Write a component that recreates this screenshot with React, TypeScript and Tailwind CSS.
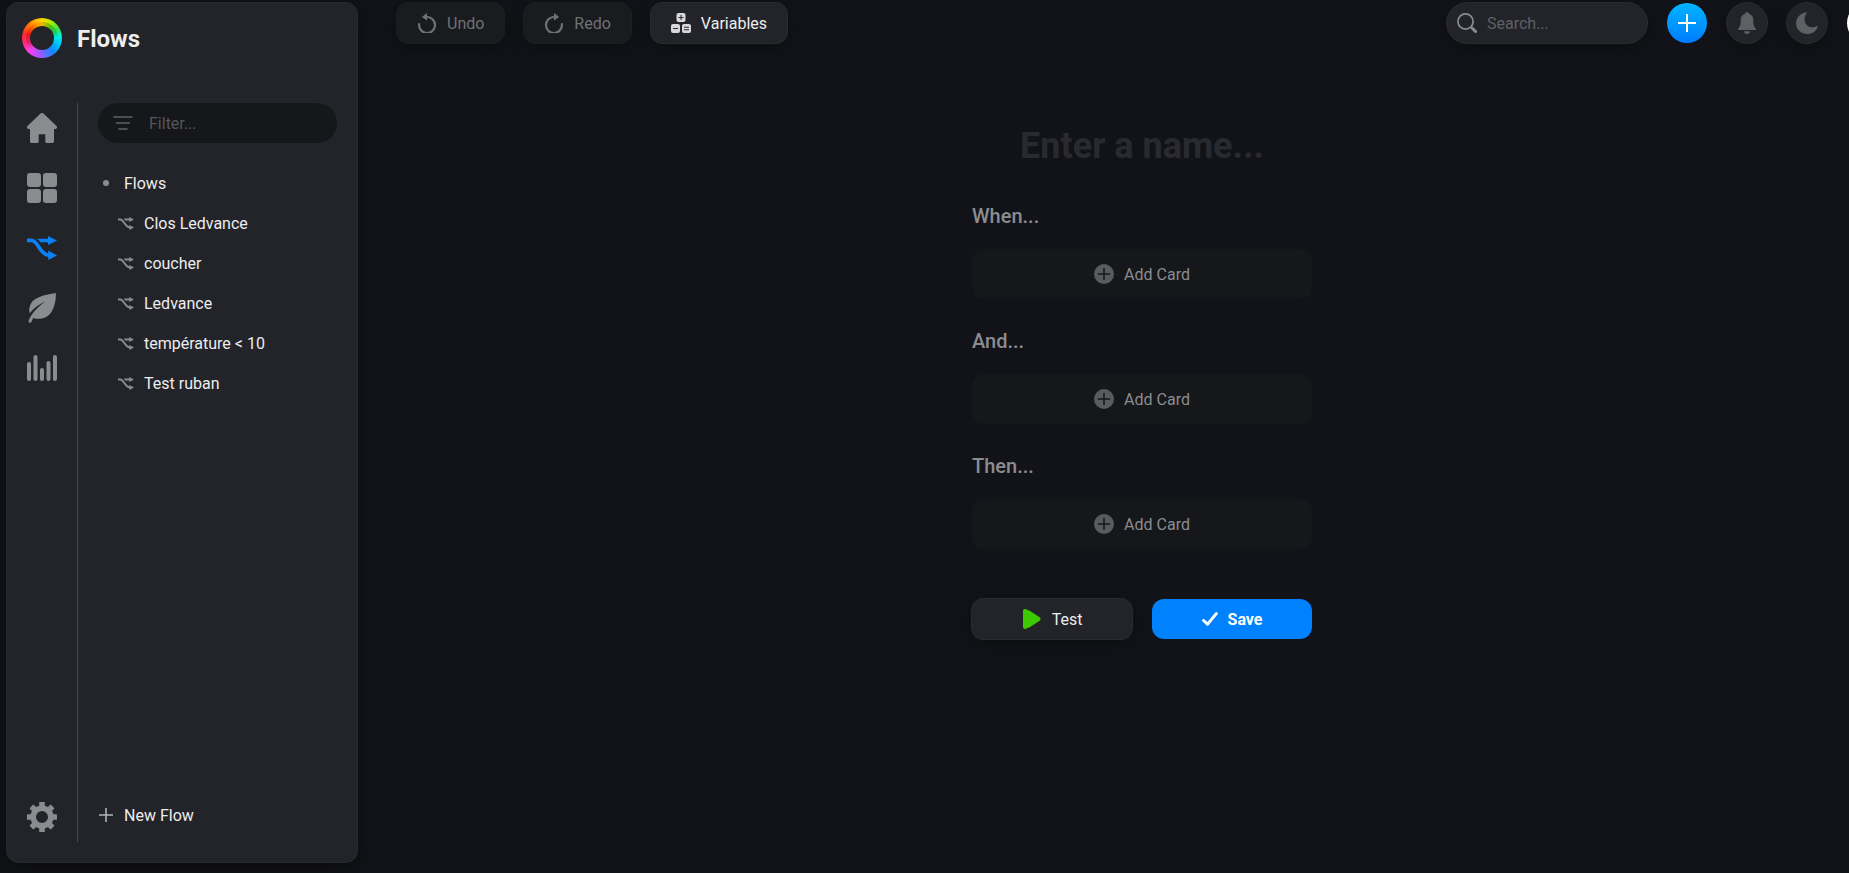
import React from "react";

type IconProps = { className?: string };

function Logo() {
  return (
    <span
      aria-hidden="true"
      className="grid size-10 shrink-0 place-items-center rounded-full bg-[conic-gradient(#ffd800,#a6f000_30deg,#3fe04a_60deg,#00f0d8_85deg,#00c8ff_110deg,#0a8cff_140deg,#6a6cff_170deg,#c04cff_195deg,#ff3cf0_225deg,#ff2a70_255deg,#ff2a2a_285deg,#ff7a00_315deg,#ffc400_345deg,#ffd800)]"
    >
      <span className="grid size-8 place-items-center rounded-full bg-[conic-gradient(#f0b400,#58c000_35deg,#18c860_65deg,#00e8f0_90deg,#00a8ff_120deg,#2a7cff_150deg,#8c5cff_185deg,#e844f0_220deg,#e02060_255deg,#e81818_285deg,#f06000_315deg,#ff9c00_340deg,#f0b400)]">
        <span className="size-6 rounded-full bg-[#232429]" />
      </span>
    </span>
  );
}

function HomeIcon() {
  return (
    <svg viewBox="0 0 30 30" className="size-[30px]" fill="currentColor" aria-hidden="true">
      <path d="M13.5.6a2.2 2.2 0 0 1 3 0l13 12.4c1.1 1.1.5 3-1.100 3H27v12.2c0 1-.8 1.8-1.8 1.8h-5.4c-.9 0-1.500-.6-1.500-1.500V21.300h-6.600v7.200c0 .9-.6 1.500-1.500 1.500H4.800C3.800 30 3 29.200 3 28.200V16H1.600C0 16-.6 14.100.5 13z" />
    </svg>
  );
}

function GridIcon() {
  return (
    <svg viewBox="0 0 30 30" className="size-[30px]" fill="currentColor" aria-hidden="true">
      <rect x="0" y="0" width="14" height="14" rx="3" />
      <rect x="16" y="0" width="14" height="14" rx="3" />
      <rect x="0" y="16" width="14" height="14" rx="3" />
      <rect x="16" y="16" width="14" height="14" rx="3" />
    </svg>
  );
}

function FlowIcon({ className }: IconProps) {
  return (
    <svg viewBox="0 0 30 24" className={className} fill="currentColor" aria-hidden="true">
      <path d="M10 2.700H21V0l9 4.500L21 9V6.200h-7.800C12.400 4.800 11.300 3.500 10 2.700z" />
      <path d="M0 4.400h4.500C11 4.400 12.500 18.500 22 19.400" fill="none" stroke="currentColor" strokeWidth="3.600" />
      <path d="M21.200 14.600l8.800 4.800-8.800 4.600z" />
    </svg>
  );
}

function LeafIcon() {
  return (
    <svg viewBox="0 0 30 30" className="size-[30px]" fill="currentColor" aria-hidden="true">
      <path d="M28.800 0C18 2 8 3.500 4 10.500c-2 3.800-2.100 7.300-1.300 9.800C6.500 15.500 12 11 18.500 8.200 11.500 13.500 5.500 19 1.700 27.300c-.8 2.300 1.800 3.600 2.800 1.500.5-1.300.9-2.500 1.700-3.900 7.500 2.500 14.500 0 18.500-6.400C27.800 13.500 29.200 6 28.800 0z" />
    </svg>
  );
}

function BarsIcon() {
  return (
    <svg viewBox="0 0 30 26" className="h-[26px] w-[30px]" fill="currentColor" aria-hidden="true">
      <rect x="0" y="7" width="4" height="19" rx="2" />
      <rect x="6.500" y="0" width="4" height="26" rx="2" />
      <rect x="13" y="13" width="4" height="13" rx="2" />
      <rect x="19.500" y="6" width="4" height="20" rx="2" />
      <rect x="26" y="0" width="4" height="26" rx="2" />
    </svg>
  );
}

function GearIcon() {
  return (
    <svg viewBox="-15 -15 30 30" className="size-[30px]" fill="currentColor" aria-hidden="true">
      <circle r="8.800" fill="none" stroke="currentColor" strokeWidth="5.600" />
      {[0, 45, 90, 135, 180, 225, 270, 315].map((angle) => (
        <rect key={angle} x="-2.800" y="-15" width="5.600" height="6" rx="0.600" transform={`rotate(${angle})`} />
      ))}
    </svg>
  );
}

function FilterIcon() {
  return (
    <svg viewBox="0 0 20 14" className="h-[14px] w-5 shrink-0" stroke="currentColor" strokeWidth="1.600" strokeLinecap="round" aria-hidden="true">
      <path d="M1 1h18M3.500 7h13M6 13h8" />
    </svg>
  );
}

function UndoIcon({ className = "" }: IconProps) {
  return (
    <svg viewBox="0 0 20 20" className={`size-5 ${className}`} aria-hidden="true">
      <path d="M2.100 11A8 8 0 1 0 10 4H8" fill="none" stroke="currentColor" strokeWidth="2.200" strokeLinecap="round" />
      <path d="M4.800 3.900 10 0v7.600z" fill="currentColor" />
    </svg>
  );
}

function VariablesIcon() {
  return (
    <svg viewBox="0 0 20 20" className="size-5" aria-hidden="true">
      <g fill="#d8d8da">
        <rect x="5.500" y="0" width="9" height="9" rx="2" />
        <rect x="0" y="11" width="9" height="9" rx="2" />
        <rect x="11" y="11" width="9" height="9" rx="2" />
      </g>
      <path d="M7.500 4.500h5M10 2v5M2 15.500h5M13 14.300h5M13 16.700h5" stroke="#2c2d31" strokeWidth="1.100" />
    </svg>
  );
}

function SearchIcon() {
  return (
    <svg viewBox="0 0 20 20" className="size-5 shrink-0" fill="none" stroke="currentColor" aria-hidden="true">
      <circle cx="8.500" cy="8.500" r="7.600" strokeWidth="1.700" />
      <path d="M14 14l1.500 1.500" strokeWidth="2" />
      <path d="M15.300 15.300l3.200 3.200" strokeWidth="3" strokeLinecap="round" />
    </svg>
  );
}

function PlusIcon({ className }: IconProps) {
  return (
    <svg viewBox="0 0 18 18" className={className} fill="none" stroke="currentColor" strokeWidth="2" aria-hidden="true">
      <path d="M0 9h18M9 0v18" />
    </svg>
  );
}

function BellIcon() {
  return (
    <svg viewBox="0 0 18 22" className="h-[22px] w-[18px]" fill="currentColor" aria-hidden="true">
      <path d="M9 0c1.100 0 1.800.8 1.900 1.800C13.800 2.600 15.300 5 15.300 8c0 4.500.4 6.300 2.300 8.300.7.800.4 1.700-.6 1.700H1c-1 0-1.300-.9-.6-1.700C2.300 14.300 2.700 12.500 2.700 8c0-3 1.500-5.400 4.400-6.200C7.200.8 7.900 0 9 0z" />
      <path d="M6 19.300h6c0 1.700-1.300 2.700-3 2.700s-3-1-3-2.700z" />
    </svg>
  );
}

function MoonIcon() {
  return (
    <svg viewBox="0 0 22 22" className="size-[22px]" fill="currentColor" aria-hidden="true">
      <path d="M9.600.2C10.600-.1 11 .5 10.500 1.200 6.500 7 9 15.200 16.500 15.200c1.500 0 2.700-.4 3.900-1 .8-.4 1.500.1 1.200 1C20 19.300 16 22 11.300 22 5 22 0 17.300 0 11 0 5.900 4 1.500 9.600.2z" />
    </svg>
  );
}

function AddIcon() {
  return (
    <svg viewBox="0 0 20 20" className="size-5" aria-hidden="true">
      <circle cx="10" cy="10" r="10" fill="#5a5b5f" />
      <path d="M4.500 10h11M10 4.500v11" stroke="#17181c" strokeWidth="1.600" strokeLinecap="round" />
    </svg>
  );
}

function PlayIcon() {
  return (
    <svg viewBox="-1 0 20 20" className="size-5" fill="#3ec800" aria-hidden="true">
      <path d="M0 2C0 .4 1.600-.5 3 .3l4.500 2 8.800 5.600c1.700 1.200 1.700 3 0 4.200L7.500 17.700 3 19.700C1.600 20.500 0 19.600 0 18z" />
    </svg>
  );
}

function CheckIcon() {
  return (
    <svg viewBox="0 0 16 14" className="h-[14px] w-4" fill="none" stroke="currentColor" strokeWidth="3" strokeLinejoin="round" strokeLinecap="round" aria-hidden="true">
      <path d="M1.600 8.500 5.500 12.200 14.300 1.600" />
    </svg>
  );
}

const flows = ["Clos Ledvance", "coucher", "Ledvance", "température < 10", "Test ruban"];
const sections = ["When...", "And...", "Then..."];

function Sidebar() {
  return (
    <aside className="flex w-[352px] shrink-0 flex-col rounded-xl border border-[#28292d] bg-[#232429] shadow-[0_4px_20px_rgba(0,0,0,0.45)]">
      <header className="flex h-[100px] items-start gap-[15px] px-[15px] pt-[15px]">
        <Logo />
        <h1 className="text-2xl leading-[42px] font-bold text-[#ededee]">Flows</h1>
      </header>
      <div className="flex grow pb-5">
        <nav aria-label="Main" className="flex w-[71px] shrink-0 flex-col items-center border-r border-[#47484c] text-[#8b8c90]">
          <a href="#home" aria-label="Home" className="grid h-[50px] place-items-center"><HomeIcon /></a>
          <a href="#devices" aria-label="Devices" className="mt-[10px] grid h-[50px] place-items-center"><GridIcon /></a>
          <a href="#flows" aria-label="Flows" aria-current="page" className="mt-[10px] grid h-[50px] place-items-center text-[#0a82f5]">
            <FlowIcon className="h-6 w-[30px]" />
          </a>
          <a href="#energy" aria-label="Energy" className="mt-[10px] grid h-[50px] place-items-center"><LeafIcon /></a>
          <a href="#insights" aria-label="Insights" className="mt-[10px] grid h-[50px] place-items-center"><BarsIcon /></a>
          <a href="#settings" aria-label="Settings" className="mt-auto grid h-[50px] place-items-center"><GearIcon /></a>
        </nav>
        <div className="flex min-w-0 grow flex-col px-5">
          <label className="flex h-10 items-center gap-4 rounded-full bg-[#16171b] px-[15px] text-[#606165]">
            <FilterIcon />
            <input type="text" aria-label="Filter" placeholder="Filter..." className="w-full min-w-0 bg-transparent outline-none placeholder:text-[#55565a]" />
          </label>
          <ul className="mt-5 text-[#ececee]">
            <li>
              <a href="#all" className="flex h-10 items-center gap-[15px]">
                <span className="ml-[5px] size-[6px] rounded-full bg-[#8b8c90]" />
                Flows
              </a>
            </li>
            {flows.map((name) => (
              <li key={name}>
                <a href="#flow" className="flex h-10 items-center gap-[10px] pl-5">
                  <FlowIcon className="h-[13px] w-4 text-[#8b8c90]" />
                  {name}
                </a>
              </li>
            ))}
          </ul>
          <button type="button" className="mt-auto mb-[7px] flex h-10 items-center gap-[10px] text-[#ececee]">
            <span className="grid w-4 place-items-center text-[#b4b5b8]"><PlusIcon className="size-[14px]" /></span>
            New Flow
          </button>
        </div>
      </div>
    </aside>
  );
}

const toolButton = "flex h-[42px] items-center gap-[10px] rounded-xl border px-5 shadow-[0_4px_16px_rgba(0,0,0,0.3)]";
const roundButton = "grid size-[42px] shrink-0 place-items-center rounded-full border border-[#2a2b2f] bg-[#232429] text-[#5f6064] shadow-[0_4px_16px_rgba(0,0,0,0.3)]";

function Toolbar() {
  return (
    <div className="flex h-[42px] items-center gap-[18px]">
      <button type="button" className={`${toolButton} border-[#1d1e22] bg-[#1a1b1f] text-[#707175]`}>
        <UndoIcon />Undo
      </button>
      <button type="button" className={`${toolButton} border-[#1d1e22] bg-[#1a1b1f] text-[#707175]`}>
        <UndoIcon className="-scale-x-100" />Redo
      </button>
      <button type="button" className={`${toolButton} border-[#2a2b2f] bg-[#232429] text-[#ececee]`}>
        <VariablesIcon />Variables
      </button>
      <label className="ml-auto flex h-[42px] w-[202px] items-center gap-[10px] rounded-full border border-[#2a2b2f] bg-[#232429] px-[10px] text-[#8b8c90] shadow-[0_4px_16px_rgba(0,0,0,0.3)]">
        <SearchIcon />
        <input type="search" aria-label="Search" placeholder="Search..." className="w-full min-w-0 bg-transparent outline-none placeholder:text-[#5f6064]" />
      </label>
      <button type="button" aria-label="Add" className="mx-px grid size-10 shrink-0 place-items-center rounded-full bg-linear-to-b from-[#00b4ff] to-[#007bff] text-white">
        <PlusIcon className="size-[18px]" />
      </button>
      <button type="button" aria-label="Notifications" className={roundButton}><BellIcon /></button>
      <button type="button" aria-label="Dark mode" className={roundButton}><MoonIcon /></button>
      <button type="button" aria-label="Account" className="mx-px size-10 shrink-0 rounded-full bg-white" />
    </div>
  );
}

function FlowEditor() {
  return (
    <form className="mx-auto mt-[76px] w-[340px]">
      <input
        type="text"
        aria-label="Flow name"
        placeholder="Enter a name..."
        className="block h-[52px] w-full bg-transparent text-center text-4xl font-bold outline-none placeholder:text-[#292a2f]"
      />
      <div className="mt-8 flex flex-col gap-[30px]">
        {sections.map((title) => (
          <section key={title}>
            <h2 className="mb-[21px] text-xl leading-6 font-medium text-[#8b8c90]">{title}</h2>
            <button type="button" className="flex h-[50px] w-full items-center justify-center gap-[10px] rounded-xl bg-[#16171b] text-[#8b8c90]">
              <AddIcon />Add Card
            </button>
          </section>
        ))}
      </div>
      <div className="-mx-px mt-[49px] flex items-center gap-[18px]">
        <button type="button" className="flex h-[42px] flex-1 items-center justify-center gap-[10px] rounded-xl border border-[#2a2b2f] bg-[#232429] text-[#ececee] shadow-[0_4px_16px_rgba(0,0,0,0.3)]">
          <PlayIcon />Test
        </button>
        <button type="button" className="mx-px flex h-10 flex-1 items-center justify-center gap-[10px] rounded-xl bg-[#0082ff] font-bold text-white">
          <CheckIcon />Save
        </button>
      </div>
    </form>
  );
}

export default function App() {
  return (
    <div className="flex min-h-screen overflow-hidden bg-[#121318] pt-0.5 pb-[10px] pl-[6px] font-[Roboto,sans-serif] text-base leading-[19px]">
      <Sidebar />
      <main className="-mr-[77px] min-w-0 grow px-[38px]">
        <Toolbar />
        <FlowEditor />
      </main>
    </div>
  );
}
